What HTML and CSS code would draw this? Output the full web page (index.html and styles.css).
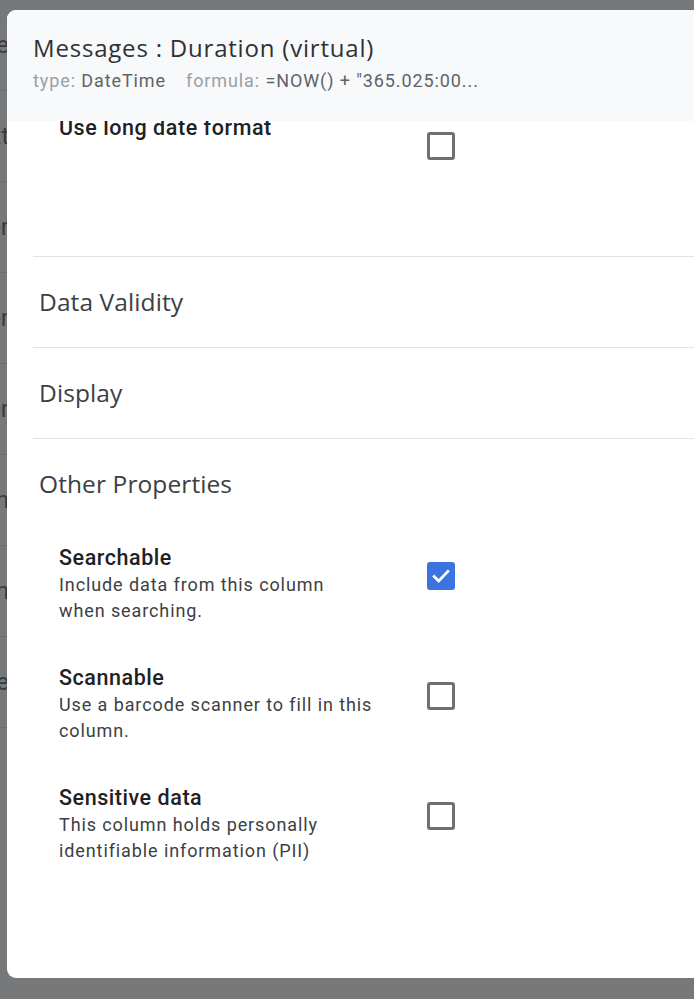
FILE: index.html
```html
<!DOCTYPE html>
<html>
<head>
<meta charset="utf-8">
<link rel="stylesheet" href="styles.css">
</head>
<body>
<div class="backdrop">
  <div class="bg-row"><span>Type</span></div>
  <div class="bg-row"><span>Text</span></div>
  <div class="bg-row"><span>Number</span></div>
  <div class="bg-row"><span>Number</span></div>
  <div class="bg-row"><span>Number</span></div>
  <div class="bg-row"><span>Column</span></div>
  <div class="bg-row"><span>Column</span></div>
  <div class="bg-row"><span>Name</span></div>
</div>

<div class="modal">
  <header class="modal-head">
    <h1 class="title">Messages : Duration (virtual)</h1>
    <div class="meta">
      <span class="meta-item"><span class="meta-label">type:</span> DateTime</span>
      <span class="meta-item"><span class="meta-label">formula:</span> =NOW() + "365.025:00...</span>
    </div>
  </header>

  <div class="modal-body">
    <div class="option first">
      <div class="option-text">
        <div class="option-name">Use long date format</div>
      </div>
      <span class="checkbox"></span>
    </div>

    <section class="group"><h2 class="group-title">Data Validity</h2></section>
    <section class="group"><h2 class="group-title">Display</h2></section>
    <section class="group open">
      <h2 class="group-title">Other Properties</h2>
      <div class="option">
        <div class="option-text">
          <div class="option-name">Searchable</div>
          <div class="option-desc">Include data from this column when searching.</div>
        </div>
        <span class="checkbox checked">
          <svg viewBox="0 0 24 24" width="24" height="24"><path d="M4.5 12.5l5 5 10-10.5" fill="none" stroke="#fff" stroke-width="3" stroke-linecap="square"/></svg>
        </span>
      </div>
      <div class="option">
        <div class="option-text">
          <div class="option-name">Scannable</div>
          <div class="option-desc">Use a barcode scanner to fill in this column.</div>
        </div>
        <span class="checkbox"></span>
      </div>
      <div class="option">
        <div class="option-text">
          <div class="option-name">Sensitive data</div>
          <div class="option-desc">This column holds personally identifiable information (PII)</div>
        </div>
        <span class="checkbox"></span>
      </div>
    </section>
  </div>
</div>
</body>
</html>
```

FILE: styles.css
```css
html, body {
  margin: 0;
  padding: 0;
  height: 100%;
}
body {
  background: #77787a;
  overflow: hidden;
  font-family: Roboto, "Liberation Sans", sans-serif;
  position: relative;
}

.backdrop {
  width: 9px;
  overflow: hidden;
  display: flex;
  flex-direction: column;
}
.bg-row {
  height: 90px;
  border-bottom: 1px solid #6c6d6f;
  display: flex;
  align-items: center;
  justify-content: flex-end;
  color: #3a3b3d;
  font-size: 24px;
  white-space: nowrap;
}

.modal {
  position: absolute;
  left: 7px;
  top: 10px;
  right: -20px;
  height: 968px;
  background: #fff;
  border-radius: 9px;
  overflow: hidden;
}

.modal-head {
  position: relative;
  z-index: 1;
  background: #f8f9fa;
  height: 111px;
  box-sizing: border-box;
  padding: 22px 0 0 26px;
}
.title {
  margin: 0;
  font-family: "Open Sans", Roboto, sans-serif;
  font-weight: 500;
  font-size: 24px;
  line-height: 32px;
  color: #303134;
  letter-spacing: 0.8px;
}
.meta {
  margin-top: 5px;
  display: flex;
  gap: 20px;
  font-size: 18px;
  line-height: 24px;
  color: #5f6368;
  letter-spacing: 0.9px;
}
.meta-label {
  color: #9aa0a6;
}

.modal-body {
  position: relative;
}

.option {
  display: flex;
  align-items: flex-start;
  padding-left: 52px;
}
.option.first {
  margin-top: -7px;
  height: 142px;
}
.option-text {
  width: 368px;
}
.option-name {
  font-size: 21.5px;
  font-weight: 500;
  line-height: 28px;
  color: #202124;
  letter-spacing: 0.55px;
}
.option-desc {
  font-size: 18px;
  line-height: 26px;
  color: #3c4043;
  letter-spacing: 0.9px;
  width: 314px;
}

.checkbox {
  margin-top: 18px;
  width: 28px;
  height: 28px;
  box-sizing: border-box;
  border: 3px solid #707070;
  border-radius: 3px;
  display: flex;
  align-items: center;
  justify-content: center;
}
.checkbox.checked {
  background: #3b73e0;
  border-color: #3b73e0;
}

.group {
  margin-left: 26px;
  border-top: 1px solid #e3e3e3;
  height: 90px;
}
.group-title {
  margin: 0;
  padding-left: 6px;
  font-family: "Open Sans", Roboto, sans-serif;
  font-weight: 400;
  font-size: 24.5px;
  line-height: 90px;
  color: #3c4043;
  letter-spacing: 0.1px;
}
.group.open {
  height: auto;
}
.group.open .group-title {
  line-height: 32px;
  padding-top: 29px;
}
.group.open .option {
  padding-left: 26px;
  height: 120px;
}
.group.open .option:first-of-type {
  margin-top: 44px;
}
```
